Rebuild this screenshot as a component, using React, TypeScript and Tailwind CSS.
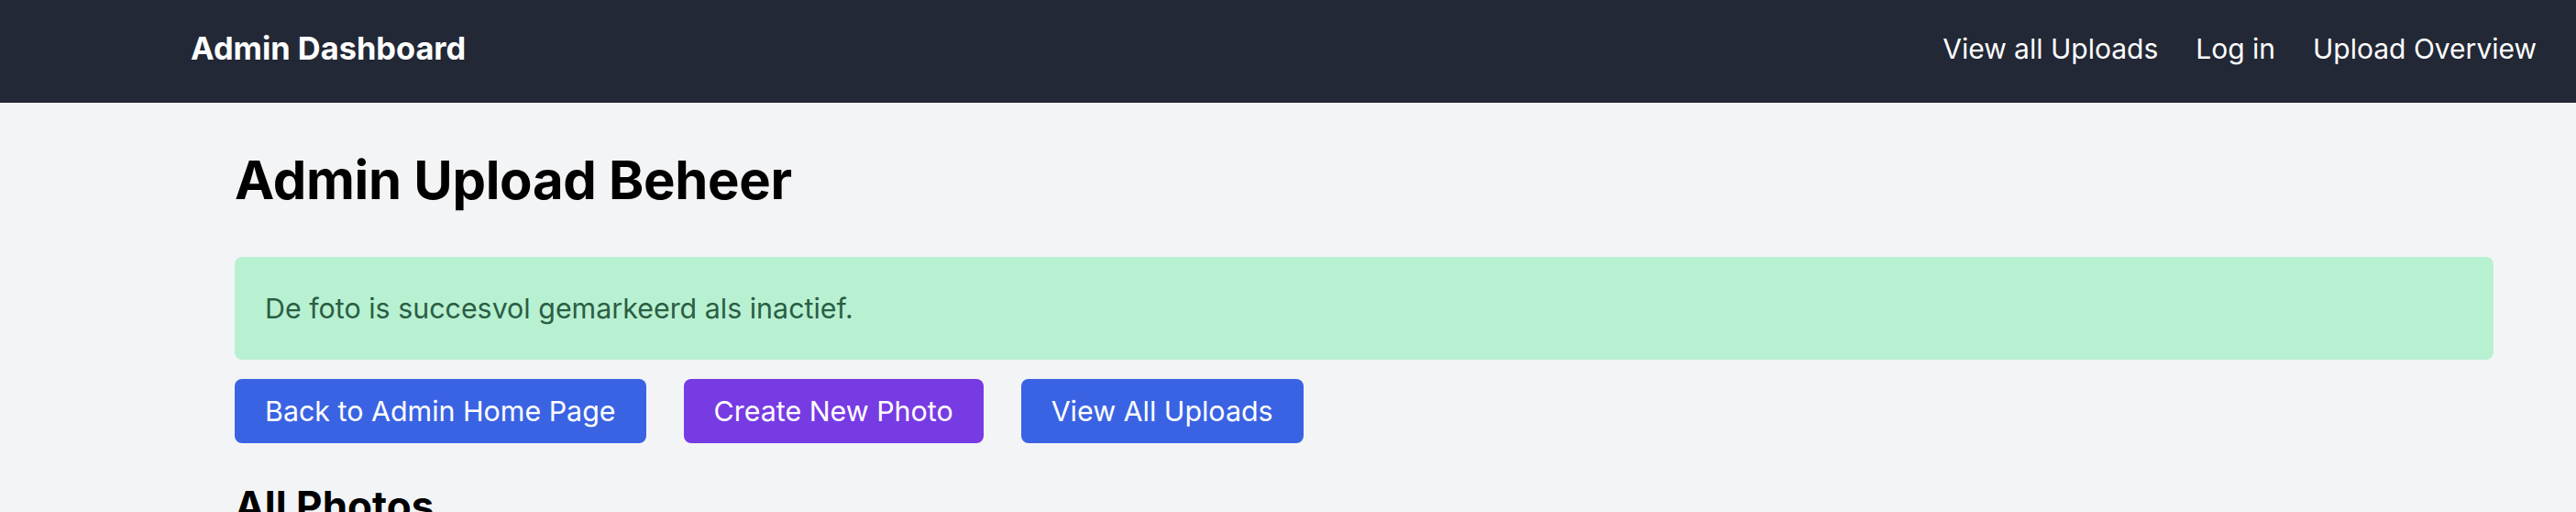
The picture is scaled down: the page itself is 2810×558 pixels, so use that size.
export default function App() {
  const links = ["View all Uploads", "Log in", "Upload Overview"];

  return (
    <div className="min-h-screen bg-[#f3f4f6] font-['Inter',sans-serif]">
      {/* Navbar */}
      <nav className="flex h-[112px] items-center justify-between bg-[#222836] pb-[7px] pl-[208px] pr-[43px]">
        <span className="text-[34.4px] font-bold leading-[40px] text-white">
          Admin Dashboard
        </span>
        <div className="flex items-center gap-[41px]">
          {links.map((l) => (
            <a key={l} className="text-[30px] leading-[40px] text-white">
              {l}
            </a>
          ))}
        </div>
      </nav>

      {/* Main */}
      <main className="pl-[256px] pr-[90px] pt-[48px]">
        <h1 className="text-[58px] font-bold leading-[72px] tracking-[-0.3px] text-black">
          Admin Upload Beheer
        </h1>

        <div className="mt-[48px] rounded-[8px] bg-[#b8f1d2] px-[33px] py-[36px] text-[30.4px] leading-[40px] text-[#2b5e44]">
          De foto is succesvol gemarkeerd als inactief.
        </div>

        <div className="mt-[21px] flex gap-[41px]">
          <button className="rounded-[8px] bg-[#3a63e3] px-[33px] py-[15px] text-[30.4px] leading-[40px] text-white">
            Back to Admin Home Page
          </button>
          <button className="rounded-[8px] bg-[#773be3] px-[33px] py-[15px] text-[30.4px] leading-[40px] text-white">
            Create New Photo
          </button>
          <button className="rounded-[8px] bg-[#3a63e3] px-[33px] py-[15px] text-[30.4px] leading-[40px] text-white">
            View All Uploads
          </button>
        </div>

        <h2 className="mt-[42px] text-[44px] font-bold leading-[52px] text-black">
          All Photos
        </h2>
      </main>
    </div>
  );
}
